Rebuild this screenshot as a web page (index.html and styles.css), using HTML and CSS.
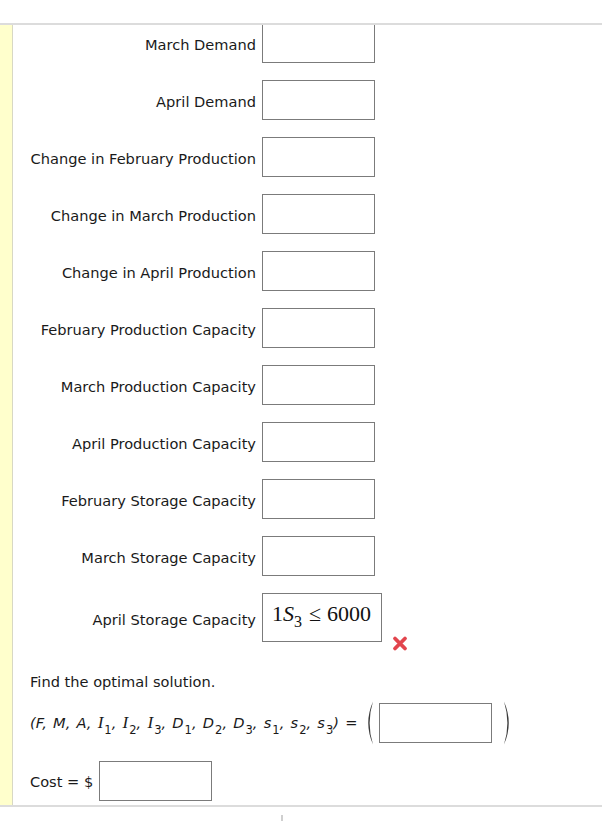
FILE: index.html
```html
<!DOCTYPE html>
<html lang="en">
<head>
    <meta charset="UTF-8">
    <title>Production Planning</title>
    <link rel="stylesheet" href="styles.css">
</head>
<body>
<div class="question">
    <div class="stripe"></div>
    <div class="qBody">
        <div class="fields">
            <label for="marDemand">March Demand</label>
            <input type="text" id="marDemand" class="answer">

            <label for="aprDemand">April Demand</label>
            <input type="text" id="aprDemand" class="answer">

            <label for="febChange">Change in February Production</label>
            <input type="text" id="febChange" class="answer">

            <label for="marChange">Change in March Production</label>
            <input type="text" id="marChange" class="answer">

            <label for="aprChange">Change in April Production</label>
            <input type="text" id="aprChange" class="answer">

            <label for="febProdCap">February Production Capacity</label>
            <input type="text" id="febProdCap" class="answer">

            <label for="marProdCap">March Production Capacity</label>
            <input type="text" id="marProdCap" class="answer">

            <label for="aprProdCap">April Production Capacity</label>
            <input type="text" id="aprProdCap" class="answer">

            <label for="febStoreCap">February Storage Capacity</label>
            <input type="text" id="febStoreCap" class="answer">

            <label for="marStoreCap">March Storage Capacity</label>
            <input type="text" id="marStoreCap" class="answer">

            <label>April Storage Capacity</label>
            <div class="answerWrap">
                <div class="mathBox"><span class="mNum">1</span><span class="mVar">S</span><sub class="mSub">3</sub><span class="mRel">≤</span><span class="mNum">6000</span></div>
                <svg class="wrongMark" width="16" height="17" viewBox="0 0 16 17">
                    <path d="M3 3.5 L13 13.5 M13 3.5 L3 13.5" stroke="#e2454d" stroke-width="3.8" stroke-linecap="round"/>
                </svg>
            </div>
        </div>

        <p class="prompt">Find the optimal solution.</p>

        <div class="tupleRow">
            <span class="tuple">(F, M, A, <span class="mi">I</span><sub>1</sub>, <span class="mi">I</span><sub>2</sub>, <span class="mi">I</span><sub>3</sub>, D<sub>1</sub>, D<sub>2</sub>, D<sub>3</sub>, s<sub>1</sub>, s<sub>2</sub>, s<sub>3</sub>) <span class="eq">=</span></span>
            <svg class="paren" width="10" height="44" viewBox="0 0 10 44">
                <path d="M9 0.5 Q-0.5 22 9 43.5 Q2.2 22 9 0.5 Z" fill="#3a3a3a"/>
            </svg>
            <input type="text" class="answer tupleInput">
            <svg class="paren closing" width="10" height="44" viewBox="0 0 10 44">
                <path d="M1 0.5 Q10.5 22 1 43.5 Q7.8 22 1 0.5 Z" fill="#3a3a3a"/>
            </svg>
        </div>

        <div class="costRow">
            <label for="cost">Cost = $</label>
            <input type="text" id="cost" class="answer">
        </div>
    </div>
</div>
<div class="scrollTick"></div>
</body>
</html>
```

FILE: styles.css
```css
body{
    margin: 0;
    padding-top: 23px;
    font-family: "DejaVu Sans", Verdana, sans-serif;
    font-size: 14.6px;
    color: #1a1a1a;
    background: white;
}
.question{
    display: flex;
    border-top: 2px solid #dcdcdc;
    border-bottom: 2px solid #dcdcdc;
    overflow: hidden;
}
.stripe{
    width: 12px;
    background-color: #ffffcc;
    border-right: 1px solid #d8d8c4;
}
.qBody{
    flex: 1;
    padding: 0 0 4px 17px;
}
.fields{
    display: grid;
    grid-template-columns: 226px auto;
    column-gap: 6px;
    row-gap: 17px;
    align-items: center;
    justify-items: start;
    margin-top: -2px;
}
.fields label{
    justify-self: end;
    white-space: nowrap;
    padding-top: 3px;
}
.answer{
    box-sizing: border-box;
    width: 113px;
    height: 40px;
    border: 1px solid #7b7b7b;
    margin: 0;
    padding: 0 4px;
    background: white;
}
.answerWrap{
    display: flex;
    align-items: flex-end;
}
.mathBox{
    box-sizing: border-box;
    width: 120px;
    height: 49px;
    border: 1px solid #7b7b7b;
    padding: 0 0 0 9px;
    font-family: "Liberation Serif", "Times New Roman", serif;
    font-size: 22px;
    line-height: 39px;
    white-space: nowrap;
    color: #111;
}
.mVar{
    font-style: italic;
}
.mSub{
    font-size: 16px;
    vertical-align: -6px;
    line-height: 0;
}
.mRel{
    margin: 0 6px 0 7px;
}
.wrongMark{
    display: block;
    margin: 0 0 -10px 10px;
}
.prompt{
    margin: 31px 0 0;
    line-height: 17px;
}
.tupleRow{
    display: flex;
    align-items: center;
    margin-top: 11px;
}
.tuple{
    font-style: italic;
    white-space: nowrap;
    word-spacing: 1.6px;
}
.tuple sub{
    font-style: normal;
    font-size: 11.5px;
    vertical-align: -6px;
    line-height: 0;
    margin-left: 1px;
}
.tuple .mi{
    font-family: "Liberation Serif", "Times New Roman", serif;
    font-size: 17px;
}
.eq{
    font-style: normal;
}
.paren{
    display: block;
    margin-left: 7px;
}
.tupleInput{
    margin-left: 5px;
}
.paren.closing{
    margin-left: 11px;
}
.costRow{
    display: flex;
    align-items: center;
    gap: 6px;
    margin-top: 16px;
}
.scrollTick{
    width: 2px;
    height: 6px;
    margin: 8px 0 0 281px;
    background-color: #cfcfcf;
}
```
